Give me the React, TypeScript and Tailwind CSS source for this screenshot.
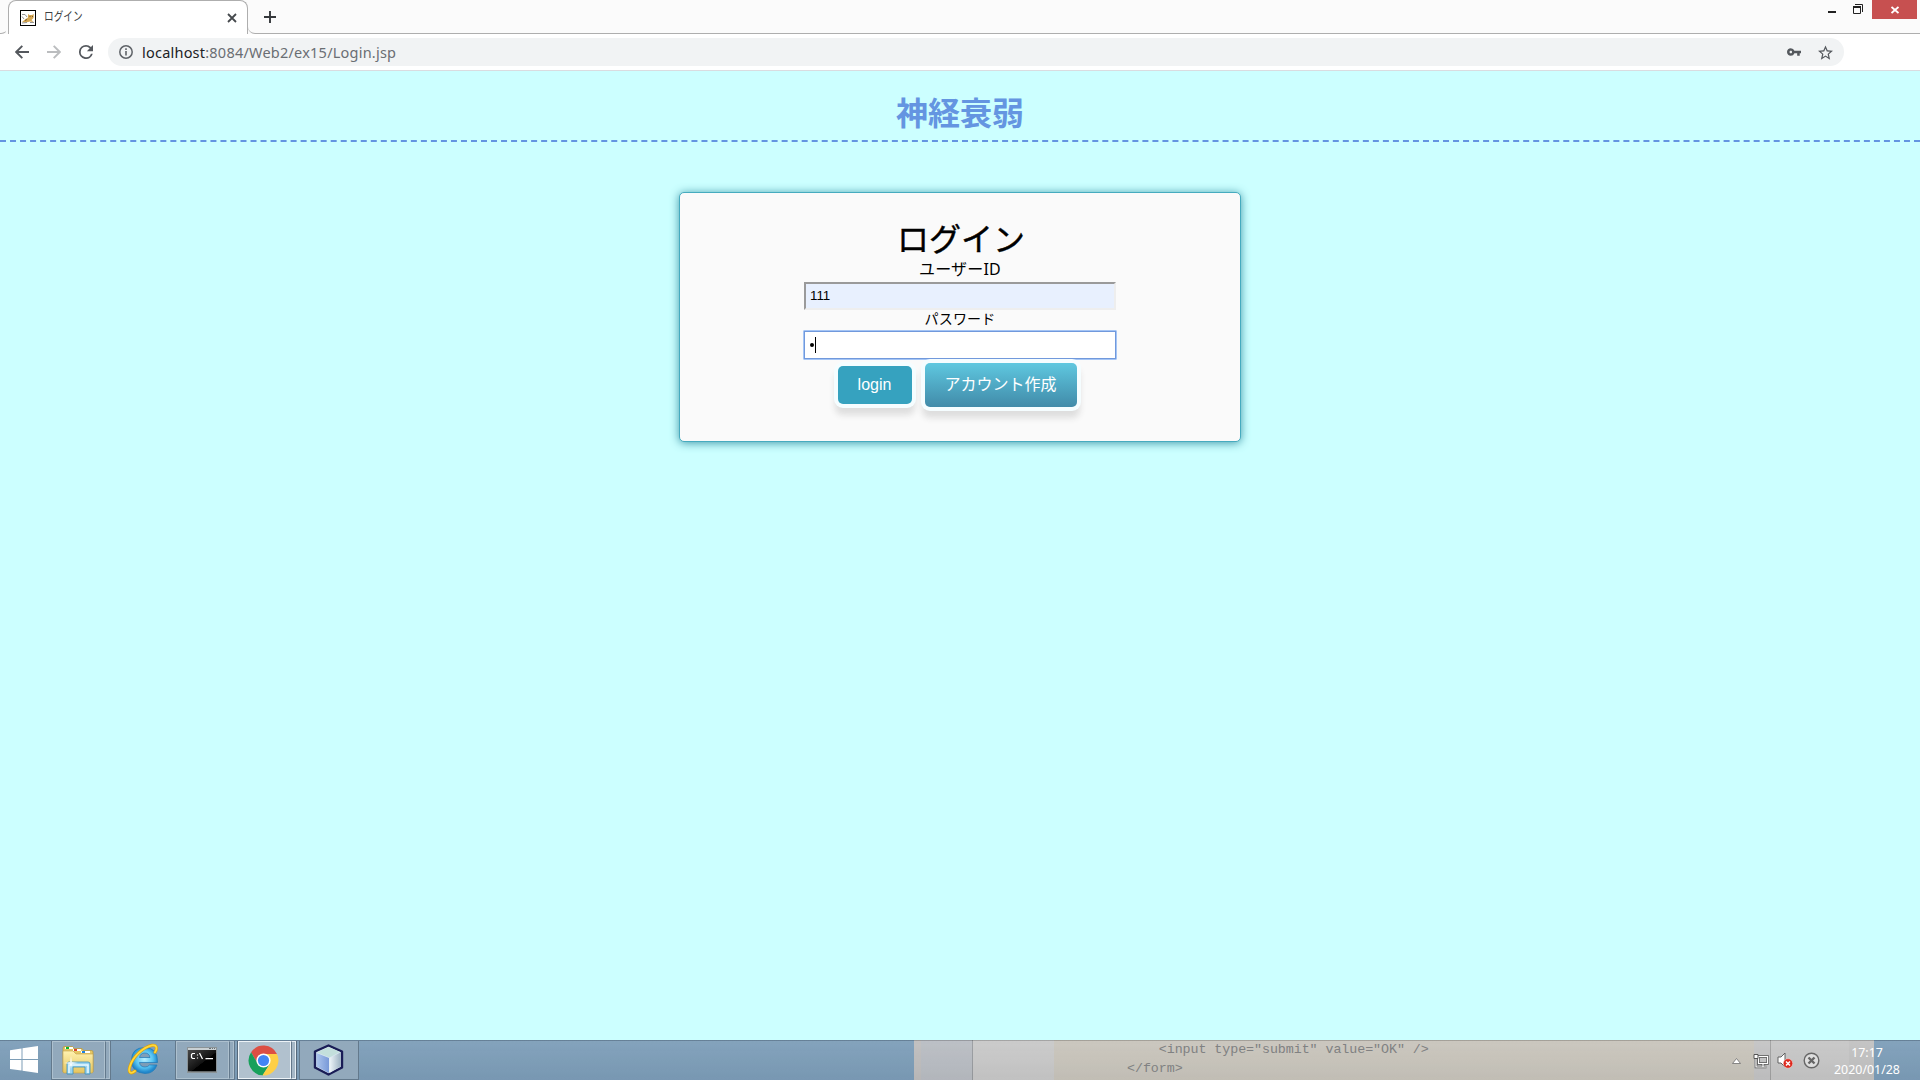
import React from "react";

const jp = "font-['Noto_Sans','Noto_Sans_CJK_JP',sans-serif]";

function TomcatIcon() {
  return (
    <svg className="size-4 shrink-0" viewBox="0 0 16 16">
      <rect x="0.5" y="0.5" width="15" height="15" fill="#fff" stroke="#000" />
      <path d="M2 12L5 9.500 8 7.500 8 4 9.500 5 12 5 13.800 4 13.500 8 11.500 10 13.500 12 10 11.500 6 12.500z" fill="#d5a754" />
      <path d="M2 4.500L5 4.500 7 7M2 6.500L4 9M2 13L7 12.500M10 12.500h4" stroke="#8a8a8a" strokeWidth=".9" fill="none" />
      <path d="M9.500 6.500h1M12 6.500h1M5 10.500l2-1" stroke="#5b4320" strokeWidth=".8" />
    </svg>
  );
}

function BrowserChrome() {
  return (
    <header className="h-[71px] w-full bg-white">
      <div className="flex h-[34px] bg-[#fbfbfb]">
        <div className="w-[8px] rounded-br-[7px] border-b border-r border-[#aeaeae] border-r-transparent" />
        <div className="flex h-[34px] w-[240px] items-center rounded-t-[8px] border border-b-0 border-[#aeaeae] bg-white pl-[11px]">
          <TomcatIcon />
          <span className="-mt-[3px] ml-[8px] w-[37px] origin-left scale-x-[0.77] whitespace-nowrap font-['Noto_Sans_CJK_JP',sans-serif] text-[12.5px] leading-[16px] text-[#3c4043]">
            ログイン
          </span>
          <svg className="ml-[146px] size-[10px]" viewBox="0 0 10 10">
            <path d="M1 1l8 8M9 1l-8 8" stroke="#45494d" strokeWidth="1.8" />
          </svg>
        </div>
        <div className="flex flex-1 rounded-bl-[7px] border-b border-[#aeaeae] pl-[16px]">
          <svg className="mt-[11px] size-[12px]" viewBox="0 0 12 12">
            <path d="M6 0v12M0 6h12" stroke="#35383b" strokeWidth="1.9" />
          </svg>
          <div className="flex-1" />
          <div className="mt-[11px] mr-[17px] h-[2px] w-[8px] bg-[#222]" />
          <svg className="mt-[4px] mr-[9px] size-[10px]" viewBox="0 0 10 10">
            <path d="M2 .5h7.5V8" fill="none" stroke="#222" />
            <path d="M.5 3v6.5h7V3" fill="none" stroke="#222" />
            <path d="M0 3h8" stroke="#222" strokeWidth="2" />
          </svg>
          <div className="mr-[3px] flex h-[19px] w-[45px] items-center justify-center bg-[#c75050]">
            <svg className="size-[8px]" viewBox="0 0 8 8">
              <path d="M.5 1l7 6M7.5 1l-7 6" stroke="#fff" strokeWidth="1.9" />
            </svg>
          </div>
        </div>
      </div>
      <div className="flex h-[37px] items-center border-b border-[#dadce0] pb-0 pl-[15px]">
        <svg className="size-[14px]" viewBox="0 0 14 14">
          <path d="M14 7H1.5M7.3 .8L1.2 7l6.1 6.2" fill="none" stroke="#54585d" strokeWidth="1.9" />
        </svg>
        <svg className="ml-[18px] size-[14px]" viewBox="0 0 14 14">
          <path d="M0 7h12.5M6.7 .8L12.8 7l-6.1 6.2" fill="none" stroke="#bbbdbf" strokeWidth="1.9" />
        </svg>
        <svg className="ml-[18px] size-[14px]" viewBox="4 4 16 16">
          <path d="M17.65 6.35A7.96 7.96 0 0 0 12 4a8 8 0 1 0 7.73 10h-2.08A6 6 0 1 1 12 6c1.66 0 3.14.69 4.22 1.78L13 11h7V4l-2.35 2.35z" fill="#54585d" />
        </svg>
        <div className="ml-[15px] flex h-[28px] w-[1736px] items-center rounded-full bg-[#f1f3f4] pl-[11px]">
          <svg className="size-[14px]" viewBox="0 0 14 14">
            <circle cx="7" cy="7" r="6.2" fill="none" stroke="#5f6368" strokeWidth="1.5" />
            <path d="M7 6v4.5M7 3.3v1.6" stroke="#5f6368" strokeWidth="1.6" />
          </svg>
          <span className="ml-[9px] w-[260px] whitespace-nowrap font-['Noto_Sans',sans-serif] text-[14.5px] leading-[20px] tracking-[0.22px] text-[#6a6e73]">
            <span className="text-[#202124]">localhost</span>:8084/Web2/ex15/Login.jsp
          </span>
          <div className="flex-1" />
          <svg className="mb-px h-[8px] w-[14px]" viewBox="1 6 22 12">
            <path d="M12.65 10A5.99 5.99 0 0 0 7 6c-3.31 0-6 2.69-6 6s2.69 6 6 6a5.99 5.99 0 0 0 5.65-4H17v4h4v-4h2v-4H12.65zM7 14c-1.1 0-2-.9-2-2s.9-2 2-2 2 .9 2 2-.9 2-2 2z" fill="#54585d" />
          </svg>
          <svg className="mr-[11px] ml-[17px] size-[15px]" viewBox="2 2 20 19">
            <path d="M22 9.24l-7.19-.62L12 2 9.19 8.63 2 9.24l5.46 4.73L5.82 21 12 17.27 18.18 21l-1.63-7.03L22 9.24zM12 15.4l-3.76 2.27 1-4.28-3.32-2.88 4.38-.38L12 6.1l1.71 4.04 4.38.38-3.32 2.88 1 4.28L12 15.4z" fill="#54585d" />
          </svg>
        </div>
      </div>
    </header>
  );
}

function LoginCard() {
  return (
    <section
      className={`mx-auto mt-[50px] flex h-[250px] w-[562px] flex-col items-center rounded-[5px] border border-[#46abbf] bg-[#fafafa] pt-[24px] text-black shadow-[0_1px_10px_#3f97a8] ${jp}`}
    >
      <h2 className="h-[42px] pl-[2px] text-[32px] leading-[43px] font-normal whitespace-nowrap [-webkit-text-stroke:0.4px_black]">ログイン</h2>
      <label className="h-[22px] text-[16px] leading-[20px] font-normal tracking-[0.2px]">ユーザーID</label>
      <div className="mt-[1px] h-[28px] w-[312px] border-2 border-t-[#9a9a9a] border-r-[#eeeeee] border-b-[#eeeeee] border-l-[#9a9a9a] bg-[#e8f0fe] pl-[4px] font-['Liberation_Sans',sans-serif] text-[13.33px] leading-[24px]">
        111
      </div>
      <label className="h-[20px] text-[14px] leading-[18px] font-normal tracking-[0.2px]">パスワード</label>
      <div className="flex h-[30px] w-[314px] items-center rounded-[1px] border border-[#a5c5f5] bg-white shadow-[inset_0_0_0_1px_#7199dc]">
        <div className="ml-[6px] size-[4px] rounded-full bg-black" />
        <div className="ml-px h-[16px] w-px bg-black" />
      </div>
      <div className="relative mt-[3px] mr-[6px] flex items-center gap-[13px] text-[16px] text-white">
        <button className="h-[38px] w-[74px] rounded-[5px] bg-[#36a2bf] font-['Liberation_Sans',sans-serif] shadow-[0_0_0_4px_#f5fdff,0_8px_6px_3px_#dedede]">
          login
        </button>
        <button className="h-[44px] w-[152px] rounded-[5px] bg-linear-to-b from-[#5fc8e0] to-[#418ba9] pb-[2px] whitespace-nowrap shadow-[0_0_0_4px_#f5fdff,0_8px_6px_3px_#dedede]">
          アカウント作成
        </button>
      </div>
    </section>
  );
}

function ExplorerIcon() {
  return (
    <svg className="mr-px h-[30px] w-[32px]" viewBox="0 0 32 30">
      <defs>
        <linearGradient id="folder" x1="0" y1="0" x2="0" y2="1">
          <stop stopColor="#fff2b0" />
          <stop offset="1" stopColor="#e5c45e" />
        </linearGradient>
      </defs>
      <path d="M1 27V3q0-1.500 1.500-1.500h8l1.500 2h8l1.500 2h8q1.500 0 1.500 1.500v20z" fill="#e5c765" stroke="#b8963d" strokeWidth=".7" />
      <path d="M3 2h8v2H3zM11 4h8v2h-8zM19 6h9v2h-9z" fill="#fff" />
      <path d="M4 2h3v2H4z" fill="#0db52c" />
      <path d="M12 4h3v2h-3z" fill="#dc422a" />
      <path d="M20 6h3v2h-3z" fill="#1d82df" />
      <path d="M1 6h10l3 3h17v17.500q0 1.500-1.500 1.500h-27Q1 28 1 26.500z" fill="url(#folder)" stroke="#c3a149" strokeWidth=".6" />
      <path d="M5 29V19q0-2 2-2h19q2 0 2 2v10h-5v-7H11v7z" fill="#9bd4ef" stroke="#3a91bd" strokeWidth=".8" />
      <path d="M7 28v-8h19v8" fill="none" stroke="#e7f8ff" strokeWidth="1.500" />
      <path d="M9 11l1 6 6 1-6 1-1 5-1-5-6-1 6-1z" fill="#fff" opacity=".8" />
    </svg>
  );
}

function IeIcon() {
  return (
    <svg className="h-[32px] w-[32px]" viewBox="0 0 32 32">
      <defs>
        <radialGradient id="ie" cx=".5" cy=".45">
          <stop stopColor="#b9f0ff" />
          <stop offset=".65" stopColor="#56c3f1" />
          <stop offset="1" stopColor="#2288cc" />
        </radialGradient>
      </defs>
      <path d="M30.500 19.500H12.500q.6 4.500 5.500 4.500 3 0 4.500-2h7.500Q27 30.500 18 30.500 4.500 29.500 4.500 17.500 4.500 4.500 18 4.500 31 5 30.500 19.500zM12.500 14.500h10.500q-.7-4.500-5.200-4.500t-5.300 4.500z" fill="url(#ie)" stroke="#1e79b8" strokeWidth=".7" fillRule="evenodd" />
      <path d="M8 28C3 32 1 29 3 23 6 14 16 4 25 2.300c5-.5 5.500 3 3 7" fill="none" stroke="#dd9f09" strokeWidth="3" strokeLinecap="round" />
      <path d="M8 28C3 32 1 29 3 23 6 14 16 4 25 2.300c5-.5 5.500 3 3 7" fill="none" stroke="#ffd83a" strokeWidth="1.800" strokeLinecap="round" />
    </svg>
  );
}

function TerminalIcon() {
  return (
    <svg className="mr-[2px] h-[26px] w-[30px]" viewBox="0 0 30 26">
      <defs>
        <linearGradient id="term" x1="0" y1="0" x2="1" y2="1">
          <stop stopColor="#484848" />
          <stop offset=".55" stopColor="#111" />
          <stop offset=".56" stopColor="#000" />
        </linearGradient>
      </defs>
      <rect x=".5" y=".5" width="29" height="25" fill="#c9d0d3" stroke="#8b9397" />
      <rect x="1" y="3" width="28" height="21.500" fill="url(#term)" />
      <path d="M22 1.500h2M25 1.500h1M27 1.500h1" stroke="#687176" />
      <path d="M8 6.500H5.500l-1 1v3l1 1H8M10.500 7.500v1M10.500 10.500v1M12.500 6l3 6M18.500 11.700H26" stroke="#fff" strokeWidth="1.200" fill="none" />
    </svg>
  );
}

function ChromeIcon() {
  return (
    <svg className="mr-[2px] size-[31px]" viewBox="0 0 48 48">
      <path d="M4.800 11.300A23 23 0 0 1 44.800 14H24L14.500 28z" fill="#dc4f44" />
      <path d="M4.800 11.300L14.600 28 24 34l10-5-11 18A23 23 0 0 1 4.800 11.300z" fill="#17a05b" />
      <path d="M24 14h20.800A23 23 0 0 1 22.500 47L34 29z" fill="#fecf46" />
      <circle cx="24" cy="24" r="11" fill="#fff" />
      <circle cx="24" cy="24" r="8.700" fill="#4285f4" />
    </svg>
  );
}

function CubeIcon() {
  return (
    <svg className="mr-[2px] h-[32px] w-[31px]" viewBox="0 0 31 32">
      <defs>
        <linearGradient id="cubeLeft">
          <stop stopColor="#acc5ec" />
          <stop offset="1" stopColor="#7899d8" />
        </linearGradient>
        <linearGradient id="cubeRight">
          <stop stopColor="#eef5f9" />
          <stop offset="1" stopColor="#9fb4c4" />
        </linearGradient>
      </defs>
      <path d="M15.500 1.500L29 7.500v16L15.500 30.500 2 23.500v-16z" fill="#d9e6f2" stroke="#191c56" strokeWidth="2.400" strokeLinejoin="round" />
      <path d="M15.500 3L27 8l-10.500 5.500L4 8.500z" fill="#c3dfdc" />
      <path d="M3.500 9l12.500 5v15L3.500 22.500z" fill="url(#cubeLeft)" />
      <path d="M16.500 14L27.500 8.500v14L16.500 29z" fill="url(#cubeRight)" />
    </svg>
  );
}

function GroupedTask({ active, children }: { active?: boolean; children: React.ReactNode }) {
  return (
    <div className={active ? "flex h-[40px] w-[60px] border border-[#56697b] bg-[#a6b8c7]" : "flex h-[40px] w-[60px] border border-[#63798c] bg-[#92a9bc]"}>
      <div className={active ? "flex flex-1 items-center justify-center border border-[#edf3f7] bg-[#b1c1ce]" : "flex flex-1 items-center justify-center border border-[#adc0ce]"}>
        {children}
      </div>
      <div className={active ? "w-[5px] border border-l-[#63778a] border-[#e5edf3]" : "w-[5px] border border-l-[#63798c] border-[#adc0ce]"} />
    </div>
  );
}

function Taskbar() {
  return (
    <footer className="flex h-[40px] w-full overflow-hidden border-t border-black/15 bg-[linear-gradient(to_bottom,rgba(255,255,255,0.06),rgba(0,0,0,0.035)),linear-gradient(to_right,#7c9db8_914px,#bebdbd_914px_921px,#b8bcc2_921px_972px,#989b9f_972px_973px,#c8c8c8_973px_1054px,#c8c4bb_1054px_1754px,#c3c3c4_1754px_1770px,#a0a0a0_1770px_1771px,#c6c6c6_1771px_1849px,#c1c1c1_1849px_1874px,#7c9db8_1874px)]">
      <div className="-mt-px flex w-[1127px] items-start">
        <svg className="mt-[6px] ml-[10px] h-[27px] w-[28px]" viewBox="0 0 28 27">
          <path d="M0 4.200L11.500 2.500V13H0zM12.500 2.300L28 0v13H12.500zM0 14h11.500v10.500L0 23zM12.500 14H28v13l-15.500-2.200z" fill="#fff" />
        </svg>
        <div className="ml-[13px]"><GroupedTask><ExplorerIcon /></GroupedTask></div>
        <div className="mt-[3px] ml-[16px]"><IeIcon /></div>
        <div className="ml-[16px]"><GroupedTask><TerminalIcon /></GroupedTask></div>
        <div className="ml-[2px]"><GroupedTask active><ChromeIcon /></GroupedTask></div>
        <div className="ml-[2px] flex h-[40px] w-[60px] items-center justify-center border border-[#63798c] bg-[#92a9bc]">
          <CubeIcon />
        </div>
      </div>
      <pre className="-mt-px w-[603px] font-['Liberation_Mono',monospace] text-[13.33px] leading-[19px] tracking-[-0.06px] text-[#808182]">
        {'    <input type="submit" value="OK" />\n</form>'}
      </pre>
      <div className="flex h-[39px] flex-1 items-center text-white">
        <svg className="ml-[2px] h-[6px] w-[9px]" viewBox="0 0 9 6">
          <path d="M4.500.5L8.500 5.500h-8z" fill="#fff" stroke="#6e6e6e" strokeWidth=".8" />
        </svg>
        <svg className="ml-[12px] h-[16px] w-[16px]" viewBox="0 0 16 16">
          <path d="M5.500 3.500h9v7h-9zM10 11v3M6.500 14h7M3 6v8h4" fill="none" stroke="#555" strokeWidth="2.600" />
          <path d="M5.500 3.500h9v7h-9zM10 11v3M6.500 14h7M3 6v8h4" fill="none" stroke="#fff" strokeWidth="1.200" />
          <path d="M1 1.500h4v4H1z" fill="#fff" stroke="#555" />
        </svg>
        <svg className="ml-[8px] h-[17px] w-[16px]" viewBox="0 0 16 17">
          <path d="M1 5h3l4-4v14l-4-4H1z" fill="#fff" stroke="#555" strokeWidth=".9" />
          <circle cx="11" cy="11.500" r="4.700" fill="#dd281d" stroke="#f6d8d4" strokeWidth=".5" />
          <path d="M9 9.500l4 4M13 9.500l-4 4" stroke="#fff" strokeWidth="1.500" />
        </svg>
        <svg className="ml-[10px] size-[17px]" viewBox="0 0 17 17">
          <circle cx="8.500" cy="8.500" r="7.300" fill="#dedede" stroke="#666" strokeWidth="1.400" />
          <path d="M5.500 5.500l6 6M11.500 5.500l-6 6" stroke="#666" strokeWidth="2.400" />
        </svg>
        <div className="ml-[11px] w-[72px] pt-px text-center font-['Noto_Sans',sans-serif] text-[12.4px] leading-[17px] whitespace-nowrap">
          <div>17:17</div>
          <div>2020/01/28</div>
        </div>
      </div>
    </footer>
  );
}

export default function App() {
  return (
    <div className="flex h-[1080px] w-[1920px] flex-col overflow-hidden bg-[#ccffff]">
      <BrowserChrome />
      <main className="flex-1">
        <h1 className={`h-[71px] border-b-2 border-dashed border-[#6495e1] pt-[18px] text-center text-[32px] leading-[48px] font-bold text-[#6495e1] ${jp}`}>
          神経衰弱
        </h1>
        <LoginCard />
      </main>
      <Taskbar />
    </div>
  );
}
